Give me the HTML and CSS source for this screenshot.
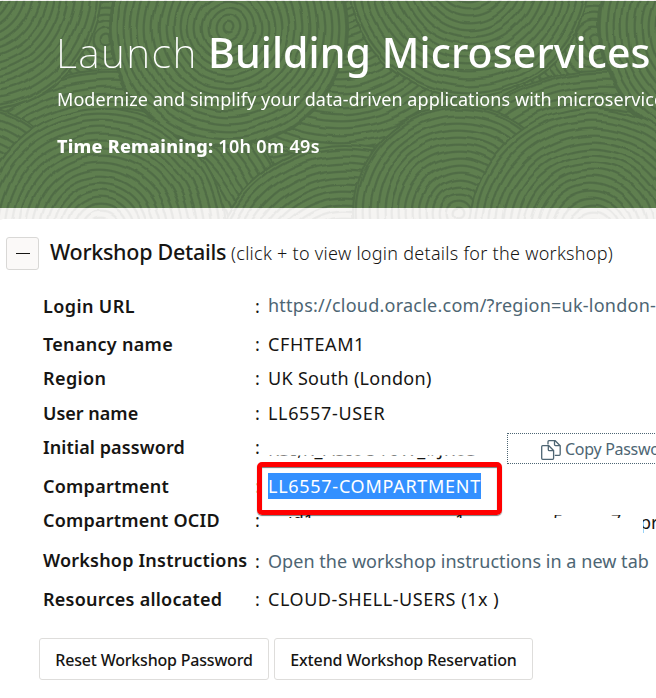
FILE: index.html
```
<!DOCTYPE html>
<html lang="en">
<head>
<meta charset="utf-8">
<title>Launch Building Microservices</title>
<link rel="stylesheet" href="styles.css">
</head>
<body>
<div class="page">
  <svg class="texture" width="656" height="220" viewBox="0 0 656 220" aria-hidden="true">
    <defs>
      <radialGradient id="rings" gradientUnits="userSpaceOnUse" cx="0" cy="0" r="7" spreadMethod="repeat">
        <stop offset="0" stop-color="#5f7f4f"/><stop offset=".5" stop-color="#5f7f4f"/>
        <stop offset=".68" stop-color="#506c46"/><stop offset=".84" stop-color="#506c46"/>
        <stop offset="1" stop-color="#5f7f4f"/>
      </radialGradient>
      <filter id="carved" filterUnits="userSpaceOnUse" x="-10" y="-10" width="676" height="240" color-interpolation-filters="sRGB">
        <feTurbulence type="fractalNoise" baseFrequency=".025" numOctaves="2" seed="4"/>
        <feDisplacementMap in="SourceGraphic" scale="8" xChannelSelector="R" yChannelSelector="G"/>
      </filter>
      <filter id="pale" filterUnits="userSpaceOnUse" x="0" y="0" width="656" height="220" color-interpolation-filters="sRGB">
        <feColorMatrix values="0 .6 0 0 .661  0 .6 0 0 .658  0 .6 0 0 .652  0 0 0 1 0"/>
      </filter>
      <clipPath id="edges"><path d="M0 0h656v1H0zM0 208h656v12H0z"/></clipPath>
      <g id="texture">
        <g filter="url(#carved)">
          <rect x="-10" y="-10" width="676" height="240" fill="#5f7f4f"/>
          <g fill="url(#rings)" stroke="#506c46" stroke-width="2">
            <circle r="260" transform="translate(228 -60)"/>
            <circle r="95" transform="translate(105 40)"/>
            <circle r="190" transform="translate(110 260)"/>
            <circle r="121" transform="translate(-21 -10)"/>
            <circle r="170" transform="translate(340 -10)"/>
            <circle r="119" transform="translate(228 28)"/>
            <circle r="135" transform="translate(345 280)"/>
            <circle r="106" transform="translate(-31 212)"/>
            <circle r="123" transform="translate(101 231)"/>
            <circle r="90" transform="translate(595 40)"/>
            <circle r="190" transform="translate(602 260)"/>
            <circle r="119" transform="translate(718 28)"/>
            <circle r="121" transform="translate(469 -24)"/>
            <circle r="106" transform="translate(459 212)"/>
            <circle r="123" transform="translate(592 231)"/>
          </g>
        </g>
      </g>
    </defs>
    <use href="#texture"/>
    <g clip-path="url(#edges)"><g filter="url(#pale)"><use href="#texture"/></g></g>
  </svg>
  <header class="hero">
    <h1><span class="launch">Launch</span> <span class="name">Building Microservices</span></h1>
    <p class="tagline">Modernize and simplify your data-driven applications with microservices</p>
    <p class="remaining"><b>Time Remaining:</b> <span>10h 0m 49s</span></p>
  </header>
  <main class="panel">
    <div class="heading">
      <button class="toggle" aria-label="Collapse"><i></i></button>
      <h2>Workshop Details</h2>
      <span class="hint">(click + to view login details for the workshop)</span>
    </div>
    <dl class="details">
      <dt class="k-login">Login URL</dt><dd><i>:</i><a class="url">https://cloud.oracle.com/?region=uk-london-</a></dd>
      <dt class="k-tenancy">Tenancy name</dt><dd><i>:</i><span class="v-tenancy">CFHTEAM1</span></dd>
      <dt class="k-region">Region</dt><dd><i>:</i><span class="v-region">UK South (London)</span></dd>
      <dt class="k-user">User name</dt><dd><i>:</i><span class="v-user">LL6557-USER</span></dd>
      <dt class="k-pass">Initial password</dt><dd class="r-pass"><i>:</i><span class="hidden-pass">KSI,K_ASI0U16W_#JK0S</span>
        <a class="copy"><svg width="20" height="20" viewBox="0 0 20 20" fill="none" stroke="#4d6573" stroke-width="1.3"><path d="M7 4.5V1.7q0-1 1-1h6.2l5 5v8.6q0 1-1 1h-4.4M13.5 1v3.6q0 1 1 1H19M1.7 5.7h6.1l4.8 4.8v7.8q0 1-1 1H1.7q-1 0-1-1V6.7q0-1 1-1ZM7.3 6v3.7q0 1 1 1h3.9"/></svg><span>Copy Password</span></a></dd>
      <dt class="k-comp">Compartment</dt><dd><i class="dim">:</i><span class="selected"><span>LL6557-COMPARTMENT</span></span><span class="marker"></span></dd>
      <dt class="k-ocid">Compartment OCID</dt><dd class="r-ocid"><i>:</i><span class="ocid"><span>id1</span><span>1</span><span>5</span><span>7</span></span><span class="ocid-end">pr</span></dd>
      <dt class="k-instr">Workshop Instructions</dt><dd><i>:</i><a class="instr">Open the workshop instructions in a new tab</a></dd>
      <dt class="k-res">Resources allocated</dt><dd><i>:</i><span class="v-res">CLOUD-SHELL-USERS (1x )</span></dd>
    </dl>
    <div class="actions"><button class="reset">Reset Workshop Password</button><button class="extend">Extend Workshop Reservation</button></div>
  </main>
</div>
</body>
</html>
```
FILE: styles.css
```
* { box-sizing: border-box; }
body { margin: 0; overflow: hidden; background: #fff; font-family: "Noto Sans", "Open Sans", sans-serif; color: #161513; }
h1, h2, p, dl, dd { margin: 0; font-weight: 400; }
.page { position: relative; width: 656px; height: 698px; overflow: hidden; white-space: nowrap; }
.texture { position: absolute; left: 0; top: 0; }
.hero { position: relative; height: 219px; padding: 25px 0 0 57px; color: #fff; }
h1 { font-size: 41px; line-height: 54px; height: 54px; display: flex; }
.launch { font-weight: 200; width: 152px; letter-spacing: 1.4px; margin-left: -1px; }
.name { font-weight: 500; letter-spacing: .1px; }
.tagline { margin-top: 7px; font-size: 18px; line-height: 26px; height: 26px; letter-spacing: .07px; }
.remaining { margin-top: 21px; display: flex; gap: 5px; font-size: 18px; line-height: 26px; }
.remaining b { font-weight: 800; letter-spacing: .25px; }
.remaining span { font-weight: 600; letter-spacing: .3px; }
.panel { position: relative; height: 479px; background: #fff; border-radius: 4px 0 0 0; padding-top: 18px; }
.heading { display: flex; height: 33px; padding-left: 6px; align-items: center; }
.toggle { width: 33px; height: 33px; padding: 0; border: 1px solid #d9d8d6; border-radius: 3px; background: #fbf9f8; display: grid; place-items: center; margin-right: 11px; }
.toggle i { width: 14px; height: 1px; background: #161513; }
h2 { font-size: 21.5px; font-weight: 500; width: 181px; line-height: 30px; letter-spacing: -.28px; margin-top: -4px; }
.hint { font-size: 18px; font-weight: 300; line-height: 30px; letter-spacing: .28px; margin-top: -2px; }
.details { display: grid; grid-template-columns: 212px 1fr; grid-template-rows: 42px 34px 35px 34px 37px 37px 37px 40px 38px; margin-top: 15px; padding-left: 43px; font-size: 18px; align-items: center; }
dt { font-weight: 600; }
dd { position: relative; display: flex; align-items: center; height: 100%; }
dd i { width: 13px; font-style: normal; }
.url, .instr, .copy { color: #4d6573; }
.k-login { letter-spacing: .4px; }
.k-tenancy { letter-spacing: .3px; }
.k-region { letter-spacing: .4px; }
.k-region, .k-region + dd { margin-top: -2px; }
.k-pass { letter-spacing: .1px; margin-top: -4px; }
.k-comp { letter-spacing: .25px; }
.k-ocid { letter-spacing: .2px; margin-top: -5px; }
.k-instr { letter-spacing: .2px; margin-top: -2px; }
.k-res { letter-spacing: .25px; }
.k-res, .k-res + dd { margin-top: -2px; }
.url { letter-spacing: .24px; margin-top: -2px; }
.v-tenancy { letter-spacing: .6px; }
.v-region { letter-spacing: .3px; }
.v-user { letter-spacing: .65px; }
.v-res { letter-spacing: .55px; }
.instr { letter-spacing: .04px; }
.r-pass > i { margin-top: -4px; }
.r-ocid > i { margin-top: -5px; }
.hidden-pass { letter-spacing: .7px; clip-path: inset(19px 0 0 0); }
.copy { position: absolute; left: 252px; top: 3px; width: 170px; height: 31px; border: 1px dotted #4d6573; display: flex; align-items: center; gap: 4px; padding-left: 33px; font-size: 16px; }
.copy svg { flex: none; margin-top: 3px; }
.copy span { letter-spacing: -.3px; }
.dim { color: #d4bd8f; }
.selected { background: #3390ff; color: #fff; width: 213px; height: 26px; line-height: 26px; letter-spacing: .72px; }
.marker { position: absolute; left: 2px; top: -5px; width: 245px; height: 53px; border: 5px solid #f00; border-radius: 5px; box-shadow: 0 1px 1px #777, inset 0 1px 1px #777; }
.ocid { display: flex; width: 372px; margin-top: -5px; padding-left: 20px; clip-path: inset(7px 0 14px 0); }
.ocid-end { margin-top: -1px; clip-path: inset(0 0 0 3px); }
.ocid span:nth-child(1) { width: 167px; }
.ocid span:nth-child(2) { width: 98px; }
.ocid span:nth-child(3) { width: 58px; }
.actions { display: flex; gap: 5px; margin: 19px 0 0 39px; }
.actions button { width: 230px; height: 42px; padding: 2px 0 0; border: 1px solid #dedddb; border-radius: 3px; background: #fff; font: 500 16px "Noto Sans", sans-serif; color: #161513; letter-spacing: -.2px; }
.actions .extend { width: 259px; letter-spacing: -.12px; }
```
